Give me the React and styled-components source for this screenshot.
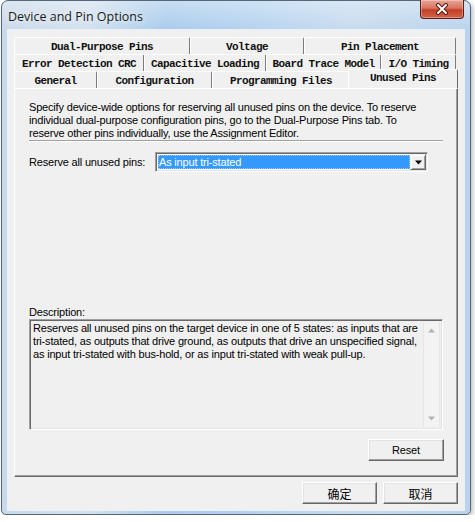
import React from "react"
import styled, { createGlobalStyle } from "styled-components"

const Global = createGlobalStyle`
  html, body { margin: 0; padding: 0; background: #fff; }
  body { font-family: "Liberation Sans", Arial, sans-serif; }
`

const Window = styled.div`
  position: relative;
  width: 470px;
  height: 515px;
  margin-left: 1px;
  box-sizing: border-box;
  border: 1px solid #55677a;
  border-radius: 7px 7px 5px 5px;
  padding: 0 6px 4px 6px;
  display: flex;
  flex-direction: column;
  background:
    linear-gradient(180deg, rgba(255,255,255,0.35) 0px, rgba(255,255,255,0) 30px),
    linear-gradient(90deg, #c9d9ea 0%, #d3e1ee 18%, #a9cbec 35%, #b5d3ef 55%, #c7dbee 75%, #b9d3ec 100%);
  box-shadow: 2px 2px 4px rgba(0,0,0,0.25);
`

const TitleBar = styled.div`
  height: 29px;
  display: flex;
  align-items: flex-start;
`

const Title = styled.div`
  align-self: center;
  padding-top: 1px;
  font: 12.5px "Open Sans", "Noto Sans", sans-serif;
  color: #1b1b1b;
  text-shadow: 0 0 6px rgba(255,255,255,0.9);
`

const CloseButton = styled.div`
  margin-left: auto;
  margin-top: -1px;
  width: 44px;
  height: 19px;
  box-sizing: border-box;
  border: 1px solid #5d1d14;
  border-top: none;
  border-radius: 0 0 4px 4px;
  background: linear-gradient(180deg, #e8a597 0%, #d9735f 45%, #c23f28 55%, #d4634a 100%);
  display: flex;
  align-items: center;
  justify-content: center;
  box-shadow: inset 0 0 0 1px rgba(255,255,255,0.3);
`

const Client = styled.div`
  height: 480px;
  box-sizing: border-box;
  background: #f0f0f0;
  padding: 7px 6px 6px 6px;
  display: flex;
  flex-direction: column;
  box-shadow: 0 0 0 1px #e9f1f8;
`

const TabRow = styled.div`
  display: flex;
  height: 17px;
  margin-right: 2px;
`

const Tab = styled.div`
  position: relative;
  width: ${p => p.$w}px;
  flex: none;
  box-sizing: border-box;
  border-top: 1px solid #fff;
  border-left: 1px solid #fff;
  border-right: 1px solid #7c7c7c;
  border-radius: 2px 2px 0 0;
  background: #f0f0f0;
  padding-top: 2px;
  display: flex;
  align-items: center;
  justify-content: center;
  font: bold 11px "Liberation Mono", monospace;
  letter-spacing: -0.6px;
  color: #111;
  white-space: nowrap;

  ${p => p.$active && `
    z-index: 1;
    height: 19px;
    margin: -2px -2px -1px -2px;
    width: ${p.$w + 4}px;
    border-right: 1px solid #696969;
    padding-top: 0;
    padding-bottom: 2px;
  `}
`

const Panel = styled.div`
  height: 389px;
  box-sizing: border-box;
  border-top: 1px solid #fff;
  border-left: 1px solid #fff;
  border-right: 1px solid #696969;
  border-bottom: 1px solid #696969;
  box-shadow: inset -1px -1px 0 #a0a0a0;
  padding: 12px 14px 15px 14px;
  display: flex;
  flex-direction: column;
  font-size: 11px;
  letter-spacing: -0.18px;
  color: #000;
`

const Intro = styled.p`
  margin: 0;
  line-height: 13px;
  white-space: nowrap;
`

const Etched = styled.div`
  border-top: 1px solid #a0a0a0;
  border-bottom: 1px solid #fff;
`

const ComboRow = styled.div`
  display: flex;
  align-items: center;
  margin-top: 10px;
  height: 20px;
`

const Label = styled.span`
  width: 126px;
  flex: none;
`

const Combo = styled.div`
  width: 273px;
  height: 20px;
  box-sizing: border-box;
  border: 1px solid;
  border-color: #a0a0a0 #fff #fff #a0a0a0;
  box-shadow: inset 1px 1px 0 #696969, inset -1px -1px 0 #e3e3e3;
  background: #fff;
  padding: 2px;
  display: flex;
`

const Selected = styled.div`
  flex: 1;
  background: #3399ff;
  color: #fff;
  padding-left: 1px;
  display: flex;
  align-items: center;
  outline: 1px dotted #9ccaff;
  outline-offset: -1px;
`

const ArrowButton = styled.div`
  width: 16px;
  box-sizing: border-box;
  border: 1px solid;
  border-color: #f0f0f0 #696969 #696969 #f0f0f0;
  box-shadow: inset 1px 1px 0 #fff, inset -1px -1px 0 #a0a0a0;
  background: #f0f0f0;
  display: flex;
  align-items: center;
  justify-content: center;
  margin: -1px -1px -1px 0;
`

const Spacer = styled.div`
  flex: 1;
`

const Caption = styled.div`
  line-height: 13px;
`

const DescBox = styled.div`
  height: 111px;
  box-sizing: border-box;
  border: 1px solid;
  border-color: #a0a0a0 #fff #fff #a0a0a0;
  box-shadow: inset 1px 1px 0 #696969, inset -1px -1px 0 #e3e3e3;
  background: #f0f0f0;
  padding: 2px;
  display: flex;
`

const DescText = styled.div`
  flex: 1;
  padding: 0 0 0 1px;
  line-height: 13px;
  white-space: nowrap;
`

const ScrollBar = styled.div`
  width: 17px;
  display: flex;
  flex-direction: column;
  justify-content: space-between;
  background: #f3f3f3;
  border-left: 1px solid #e6e6e6;
  border-right: 1px solid #e6e6e6;
  box-sizing: border-box;
`

const ScrollArrow = styled.div`
  height: 17px;
  display: flex;
  align-items: center;
  justify-content: center;
`

const ButtonRow = styled.div`
  display: flex;
  justify-content: flex-end;
  gap: ${p => p.$gap || 0}px;
  margin-top: ${p => p.$top || 0}px;
  margin-right: ${p => p.$right || 0}px;
`

const Button = styled.div`
  width: ${p => p.$w || 75}px;
  height: ${p => p.$h || 22}px;
  box-sizing: border-box;
  border: 1px solid;
  border-color: #fff #696969 #696969 #fff;
  box-shadow: inset -1px -1px 0 #a0a0a0, inset 1px 1px 0 #e3e3e3;
  background: #f0f0f0;
  display: flex;
  align-items: center;
  justify-content: center;
  color: #000;
  font-size: ${p => p.$cjk ? 12 : 11}px;
  font-family: ${p => p.$cjk
    ? `"Noto Sans CJK SC", sans-serif`
    : `"Liberation Sans", Arial, sans-serif`};
`

const rows = [
  [["Dual-Purpose Pins", 176], ["Voltage", 114], ["Pin Placement", 152]],
  [["Error Detection CRC", 130], ["Capacitive Loading", 122], ["Board Trace Model", 115], ["I/O Timing", 75]],
  [["General", 83], ["Configuration", 115], ["Programming Files", 138], ["Unused Pins", 106, true]],
]

const Triangle = ({ up, color = "#000", size = 7 }) => (
  <svg width={size} height={Math.ceil(size / 2) + 1} viewBox="0 0 7 4">
    <polygon points={up ? "3.5,0 7,4 0,4" : "0,0 7,0 3.5,4"} fill={color} />
  </svg>
)

export default function App() {
  return (
    <>
      <Global />
      <Window>
        <TitleBar>
          <Title>Device and Pin Options</Title>
          <CloseButton>
            <svg width="14" height="12" viewBox="0 0 14 12">
              <path d="M3 2 L11 10 M11 2 L3 10" stroke="#5a1a12" strokeWidth="4" strokeLinecap="round" />
              <path d="M3 2 L11 10 M11 2 L3 10" stroke="#fff" strokeWidth="2" strokeLinecap="round" />
            </svg>
          </CloseButton>
        </TitleBar>
        <Client>
          {rows.map((row, i) => (
            <TabRow key={i}>
              {row.map(([label, w, active]) => (
                <Tab key={label} $w={w} $active={active}>{label}</Tab>
              ))}
            </TabRow>
          ))}
          <Panel>
            <Intro>
              Specify device-wide options for reserving all unused pins on the device. To reserve<br />
              individual dual-purpose configuration pins, go to the Dual-Purpose Pins tab. To<br />
              reserve other pins individually, use the Assignment Editor.
            </Intro>
            <Etched />
            <ComboRow>
              <Label>Reserve all unused pins:</Label>
              <Combo>
                <Selected>As input tri-stated</Selected>
                <ArrowButton><Triangle /></ArrowButton>
              </Combo>
            </ComboRow>
            <Spacer />
            <Caption>Description:</Caption>
            <DescBox>
              <DescText>
                Reserves all unused pins on the target device in one of 5 states: as inputs that are<br />
                tri-stated, as outputs that drive ground, as outputs that drive an unspecified signal,<br />
                as input tri-stated with bus-hold, or as input tri-stated with weak pull-up.
              </DescText>
              <ScrollBar>
                <ScrollArrow><Triangle up color="#b4b4b4" /></ScrollArrow>
                <ScrollArrow><Triangle color="#b4b4b4" /></ScrollArrow>
              </ScrollBar>
            </DescBox>
            <ButtonRow $top={9} $right={-1}>
              <Button $w={76} $h={22}>Reset</Button>
            </ButtonRow>
          </Panel>
          <ButtonRow $top={5} $gap={6}>
            <Button $cjk>确定</Button>
            <Button $cjk>取消</Button>
          </ButtonRow>
        </Client>
      </Window>
    </>
  )
}
